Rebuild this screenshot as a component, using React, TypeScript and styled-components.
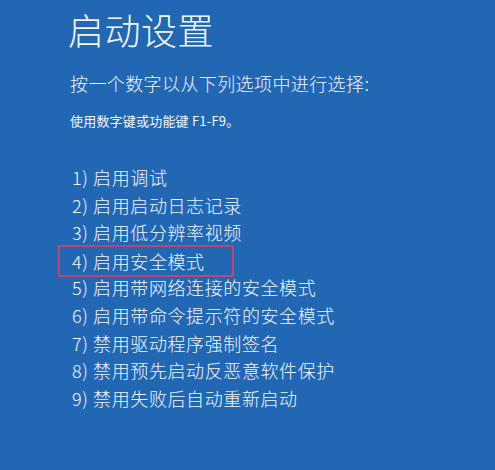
import React from 'react'
import styled, { createGlobalStyle } from 'styled-components'

const GlobalStyle = createGlobalStyle`
  html, body {
    margin: 0;
    padding: 0;
    background: #2267b4;
  }
  #root {
    min-height: 100vh;
  }
`

const options = [
  '启用调试',
  '启用启动日志记录',
  '启用低分辨率视频',
  '启用安全模式',
  '启用带网络连接的安全模式',
  '启用带命令提示符的安全模式',
  '禁用驱动程序强制签名',
  '禁用预先启动反恶意软件保护',
  '禁用失败后自动重新启动',
]

const Screen = styled.div`
  height: 470px;
  box-sizing: border-box;
  background: #2267b4;
  color: #f2f6fb;
  font-family: "Noto Sans CJK SC", "Noto Sans", sans-serif;
  padding: 7px 0 0 68px;
  display: flex;
  flex-direction: column;
  overflow: hidden;
`

const Title = styled.h1`
  margin: 0;
  font-size: 36px;
  font-weight: 300;
  line-height: 44px;
  letter-spacing: 0.5px;
`

const Prompt = styled.div`
  margin: 20px 0 0 2px;
  font-size: 18px;
  font-weight: 300;
  line-height: 24px;
  letter-spacing: 0.4px;
`

const Hint = styled.div`
  margin: 17px 0 0 2px;
  font-size: 13px;
  line-height: 18px;
  letter-spacing: 0.2px;
`

const List = styled.ol`
  list-style: none;
  margin: 34px 0 0 4px;
  padding: 0;
`

const Item = styled.li<{ $marked?: boolean }>`
  font-size: 18px;
  font-weight: 300;
  line-height: 27.6px;
  height: 27.6px;
  letter-spacing: 0.6px;
  white-space: nowrap;
  ${(p) =>
    p.$marked &&
    `
    box-sizing: border-box;
    width: 176px;
    height: 32px;
    line-height: 28px;
    margin: -2px 0 -2.4px -14px;
    padding-left: 12px;
    border: 2px solid #bf4570;
  `}
`

export default function App() {
  return (
    <>
      <GlobalStyle />
      <Screen>
        <Title>启动设置</Title>
        <Prompt>按一个数字以从下列选项中进行选择:</Prompt>
        <Hint>使用数字键或功能键 F1-F9。</Hint>
        <List>
          {options.map((text, i) => (
            <Item key={i} $marked={i === 3}>
              {i + 1}) {text}
            </Item>
          ))}
        </List>
      </Screen>
    </>
  )
}
